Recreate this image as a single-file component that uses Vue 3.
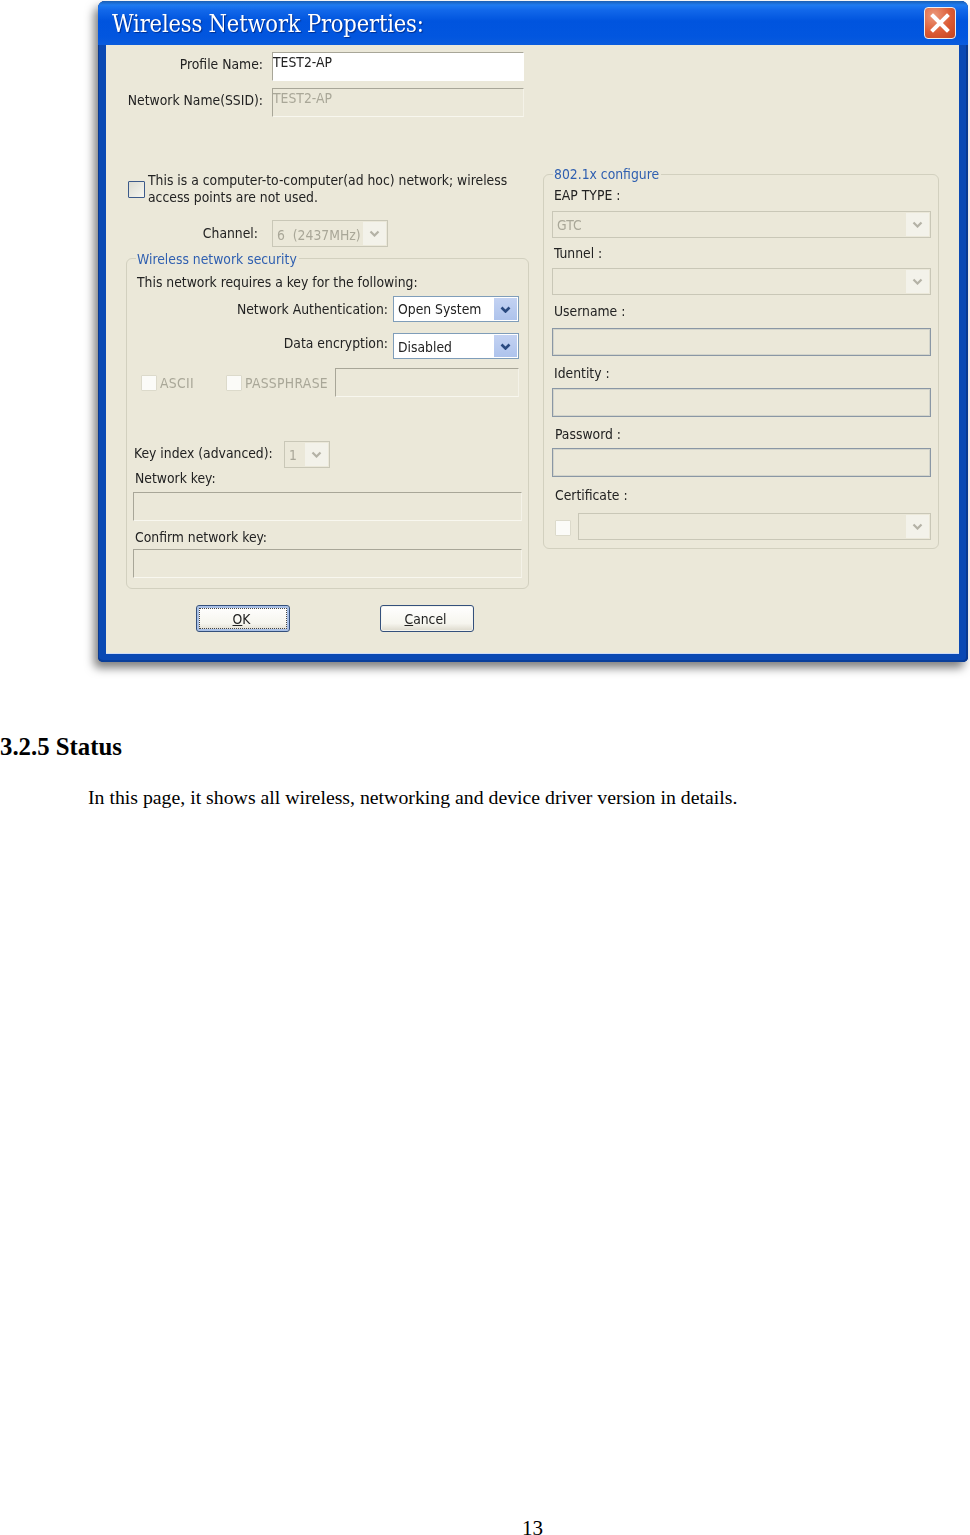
<script setup>
const chevron = 'M1.5 1.5 L5.5 5.5 L9.5 1.5'
</script>

<template>
  <div class="page">
    <div class="win">
      <div class="titlebar">
        <span class="title">Wireless Network Properties:</span>
        <span class="close">
          <svg width="22" height="22" viewBox="0 0 22 22"><path d="M4 4 L18 18 M18 4 L4 18" stroke="#fff" stroke-width="4" stroke-linecap="square" fill="none"/></svg>
        </span>
      </div>
      <div class="body">
        <div class="col-left">
          <div class="row r-profile">
            <span class="lbl w137 up">Profile Name:</span>
            <div class="inp white w252 h29"><span class="val">TEST2-AP</span></div>
          </div>
          <div class="row r-ssid">
            <span class="lbl w137 up">Network Name(SSID):</span>
            <div class="inp w252 h29"><span class="val dim">TEST2-AP</span></div>
          </div>
          <div class="adhoc">
            <span class="check blue"></span>
            <span class="adhoc-text">This is a computer-to-computer(ad hoc) network; wireless<br>access points are not used.</span>
          </div>
          <div class="row r-channel">
            <span class="lbl w132 up-s">Channel:</span>
            <div class="sel dis w116">
              <span class="sel-val dim low2">6&nbsp;&nbsp;(2437MHz)</span>
              <span class="btn"><svg width="11" height="7" viewBox="0 0 11 7"><path :d="chevron" /></svg></span>
            </div>
          </div>

          <div class="group g-left">
            <span class="legend">Wireless network security</span>
            <div class="t t-req">This network requires a key for the following:</div>
            <div class="line end r-auth">
              <span class="lbl">Network Authentication:</span>
              <div class="sel on w126">
                <span class="sel-val">Open System</span>
                <span class="btn"><svg width="11" height="7" viewBox="0 0 11 7"><path :d="chevron" /></svg></span>
              </div>
            </div>
            <div class="line end top r-enc">
              <span class="lbl enc">Data encryption:</span>
              <div class="sel on w126 low">
                <span class="sel-val">Disabled</span>
                <span class="btn"><svg width="11" height="7" viewBox="0 0 11 7"><path :d="chevron" /></svg></span>
              </div>
            </div>
            <div class="line r-opts">
              <span class="opt w85"><span class="check"></span><span class="dim spaced">ASCII</span></span>
              <span class="opt w109"><span class="check"></span><span class="dim spaced">PASSPHRASE</span></span>
              <div class="inp w184 h29"></div>
            </div>
            <div class="line r-key">
              <span class="t w150 key-lbl">Key index (advanced):</span>
              <div class="sel dis w46">
                <span class="sel-val dim">1</span>
                <span class="btn"><svg width="11" height="7" viewBox="0 0 11 7"><path :d="chevron" /></svg></span>
              </div>
            </div>
            <div class="t t-nk">Network key:</div>
            <div class="inp wide h29 i-nk"></div>
            <div class="t t-ck">Confirm network key:</div>
            <div class="inp wide h29 i-ck"></div>
          </div>

          <div class="actions">
            <button class="pbtn focus"><span class="dots"><u>O</u>K</span></button>
            <button class="pbtn"><span class="cap"><u>C</u>ancel</span></button>
          </div>
        </div>

        <div class="col-right">
          <div class="group g-right">
            <span class="legend">802.1x configure</span>
            <div class="t rl l-eap">EAP TYPE :</div>
            <div class="sel dis w379 m7">
              <span class="sel-val dim">GTC</span>
              <span class="btn"><svg width="11" height="7" viewBox="0 0 11 7"><path :d="chevron" /></svg></span>
            </div>
            <div class="t rl l-tun">Tunnel :</div>
            <div class="sel dis w379 m6">
              <span class="sel-val"></span>
              <span class="btn"><svg width="11" height="7" viewBox="0 0 11 7"><path :d="chevron" /></svg></span>
            </div>
            <div class="t rl l-usr">Username :</div>
            <div class="inp flat w379 h28 m8"></div>
            <div class="t rl l-id">Identity :</div>
            <div class="inp flat w379 h29 m6"></div>
            <div class="t rl2 l-pw">Password :</div>
            <div class="inp flat w379 h29 m5"></div>
            <div class="t rl2 l-cert">Certificate :</div>
            <div class="cert">
              <span class="check"></span>
              <div class="sel dis w353">
                <span class="sel-val"></span>
                <span class="btn"><svg width="11" height="7" viewBox="0 0 11 7"><path :d="chevron" /></svg></span>
              </div>
            </div>
          </div>
        </div>
      </div>
    </div>

    <h2 class="heading">3.2.5 Status</h2>
    <p class="para">In this page, it shows all wireless, networking and device driver version in details.</p>
    <div class="pagenum">13</div>
  </div>
</template>

<style>
html, body { margin: 0; background: #fff; }
</style>

<style scoped>
* { box-sizing: border-box; }
.page {
  width: 970px;
  height: 1535px;
  overflow: hidden;
  position: relative;
  background: #fff;
  display: flex;
  flex-direction: column;
  font-family: "Liberation Serif", serif;
  color: #000;
}
.win {
  width: 870px;
  height: 661px;
  margin: 1px 0 0 98px;
  flex: none;
  border-radius: 7px 7px 5px 5px;
  background: #0a49b4;
  box-shadow: -4px 6px 10px rgba(0,0,0,.5), inset 1px 0 0 #0a3a90, inset -2px 0 0 #0a3a90, inset 0 -2px 0 #0a3f9a;
  display: flex;
  flex-direction: column;
  padding: 0 9px 8px 8px;
  font-family: "DejaVu Sans Condensed", "DejaVu Sans", sans-serif;
  font-stretch: condensed;
  font-size: 13.8px;
  color: #222;
  filter: blur(.35px);
}
.titlebar {
  height: 44px;
  margin: 0 -9px 0 -8px;
  padding: 0 12px 0 14px;
  flex: none;
  border-radius: 7px 7px 0 0;
  display: flex;
  align-items: center;
  justify-content: space-between;
  background: linear-gradient(#1b5fb3 0, #1f7bf0 4px, #1268ea 9px, #0054de 20px, #0256df 36px, #0a5cdd 44px);
}
.title {
  font-family: "DejaVu Serif", serif;
  font-size: 23.5px;
  color: #fff;
  position: relative;
  top: 1px;
  letter-spacing: -.2px;
  text-shadow: 1px 1px 1px rgba(0,20,90,.6);
}
.close {
  width: 32px;
  height: 32px;
  border: 1px solid #eee;
  border-radius: 4px;
  background: radial-gradient(circle at 30% 25%, #ec9a7c, #dc5b34 55%, #c4431f);
  display: flex;
  align-items: center;
  justify-content: center;
}
.body {
  flex: 1;
  min-height: 0;
  background: #ebe8d9;
  padding-left: 20px;
  display: flex;
  align-items: flex-start;
  gap: 14px;
  box-shadow: inset 0 -1px 0 #cfdcf6;
}
.col-left { width: 403px; flex: none; }
.col-right { width: 396px; flex: none; margin-top: 129px; }

.row { display: flex; align-items: center; }
.r-profile { margin-top: 7px; gap: 9px; }
.r-ssid { margin-top: 7px; gap: 9px; }
.r-channel { margin-top: 14px; gap: 14px; }
.lbl { text-align: right; white-space: nowrap; display: block; }
.up { margin-top: -6px; }
.up-s { margin-top: -2px; }
.w137 { width: 137px; }
.w132 { width: 132px; }
.w252 { width: 252px; }
.w184 { width: 184px; }
.w150 { width: 150px; flex: none; }
.w116 { width: 116px; }
.w126 { width: 126px; }
.w46 { width: 46px; }
.w379 { width: 379px; margin-left: 8px; }
.w353 { width: 353px; }
.w85 { width: 85px; }
.w109 { width: 109px; }
.h29 { height: 29px; }
.h28 { height: 28px; }
.m7 { margin-top: 7px; }
.m6 { margin-top: 6px; }
.m8 { margin-top: 8px; }
.m5 { margin-top: 5px; }

.inp {
  border-style: solid;
  border-width: 1px;
  border-color: #a8a698 #f4f2e8 #f8f7ef #a8a698;
  background: #ebe8d9;
  flex: none;
}
.inp.white { background: #fff; border-color: #a8a698 #fff #fff #a8a698; }
.inp.flat { border: 1px solid #8a97a5; box-shadow: inset 0 0 0 1px rgba(138,151,165,.25); }
.val { display: block; line-height: 19px; padding-left: 0; }
.dim { color: #a9a798; }
.spaced { letter-spacing: .3px; }

.adhoc {
  margin-top: 55px;
  margin-left: 2px;
  display: flex;
  align-items: center;
  gap: 3px;
}
.adhoc-text { line-height: 17px; white-space: nowrap; }
.check {
  display: block;
  flex: none;
  width: 16px;
  height: 16px;
  background: #fbfbf8;
  border: 1px solid #dcdacb;
  border-radius: 1px;
}
.check.blue {
  width: 17px;
  height: 17px;
  border: 1px solid #3c5a8a;
  background: linear-gradient(135deg, #dcdcd2, #f6f6f0);
}

.sel {
  height: 27px;
  flex: none;
  display: flex;
  align-items: center;
  justify-content: space-between;
  border: 1px solid #c9c7b7;
  background: #ebe8d9;
  padding: 1px;
}
.sel-val { padding-left: 3px; white-space: nowrap; overflow: hidden; }
.low2 { position: relative; top: 1px; }
.btn {
  width: 23px;
  height: 100%;
  flex: none;
  display: flex;
  align-items: center;
  justify-content: center;
  background: #f3f2ea;
}
.btn svg path { fill: none; stroke: #b4b2a6; stroke-width: 2.2; }
.sel.on {
  height: 26px;
  background: #fff;
  border-color: #7f9db9;
}
.sel.on .btn { background: linear-gradient(#c3d2f2, #aec3ec); }
.sel.on .btn svg path { stroke: #2a4a80; stroke-width: 2.6; }
.low .sel-val { position: relative; top: 1px; }

.group {
  position: relative;
  border: 1px solid #d2d0bf;
  border-radius: 6px;
}
.g-left { margin-top: 11px; height: 331px; }
.g-right { height: 375px; }
.legend {
  position: absolute;
  top: -8px;
  left: 9px;
  line-height: 16px;
  padding: 0 2px 0 1px;
  background: #ebe8d9;
  color: #2f5fb0;
  white-space: nowrap;
}
.g-right .legend { left: 9px; top: -9px; }
.t { line-height: 17px; white-space: nowrap; }
.t-req { margin: 15px 0 0 10px; }
.line { display: flex; align-items: center; }
.end { justify-content: flex-end; padding-right: 9px; gap: 5px; }
.top { align-items: flex-start; }
.r-auth { margin-top: 5px; }
.r-enc { margin-top: 11px; }
.enc { line-height: 20px; }
.r-opts { margin-top: 9px; padding-left: 14px; }
.opt { display: flex; align-items: center; gap: 3px; flex: none; }
.r-key { margin-top: 44px; padding-left: 7px; }
.key-lbl { margin-top: -2px; }
.t-nk { margin: 2px 0 0 8px; }
.wide { width: 389px; margin-left: 6px; }
.i-nk { margin-top: 5px; }
.t-ck { margin: 8px 0 0 8px; }
.i-ck { margin-top: 3px; }

.actions { margin: 16px 0 0 70px; display: flex; gap: 90px; }
.pbtn {
  width: 94px;
  height: 27px;
  padding: 0;
  border: 1px solid #34507c;
  border-radius: 3px;
  background: linear-gradient(#fff, #f6f5ee 70%, #dcd9cc);
  font: inherit;
  color: #222;
  display: flex;
  align-items: center;
  justify-content: center;
  box-shadow: inset 0 0 0 1px #f4f4ee;
}
.pbtn.focus { box-shadow: inset 0 0 0 2px #a9c0e6; }
.dots {
  width: 88px;
  height: 21px;
  border: 1px dotted #444;
  display: flex;
  align-items: center;
  justify-content: center;
  padding-right: 3px;
  padding-top: 1px;
}
.cap { padding: 1px 3px 0 0; }

.rl { margin-left: 10px; }
.rl2 { margin-left: 11px; }
.l-eap { margin-top: 12px; }
.l-tun { margin-top: 7px; }
.l-usr { margin-top: 8px; }
.l-id { margin-top: 9px; }
.l-pw { margin-top: 9px; }
.l-cert { margin-top: 10px; }
.cert { margin: 9px 0 0 11px; display: flex; align-items: center; gap: 7px; }
.cert .check { margin-top: 2px; }

.heading {
  margin: 71px 0 0;
  font-size: 24.8px;
  line-height: 28px;
  font-weight: bold;
}
.para {
  margin: 24px 0 0 88px;
  font-size: 19.8px;
  line-height: 24px;
  white-space: nowrap;
}
.pagenum {
  position: absolute;
  left: 522px;
  top: 1521px;
  font-size: 21px;
  line-height: 14px;
}
</style>
